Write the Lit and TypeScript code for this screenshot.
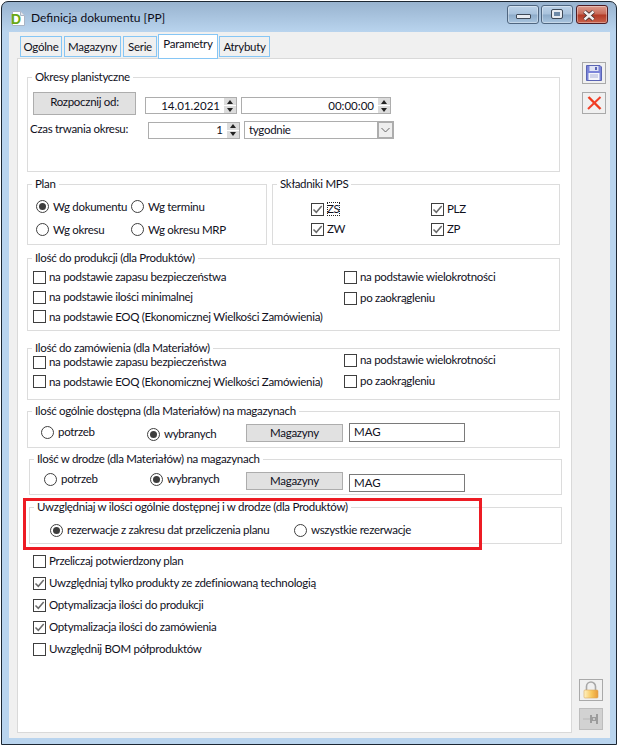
import { LitElement, html, css, svg } from "lit";
import { customElement } from "lit/decorators.js";

const tick = svg`<svg class="tick" width="11" height="11" viewBox="0 0 11 11"><path d="M1.5 5.5 L4.3 8.3 L9.7 2" fill="none" stroke="#6a6a6a" stroke-width="1.5"/></svg>`;

const check = (label: string, on = false, focus = false) => html`<div class="opt chk">
  <span class="box">${on ? tick : ""}</span><span class=${focus ? "focus" : ""}>${label}</span>
</div>`;
const radio = (label: string, on = false) => html`<div class="opt rad">
  <span class="circle">${on ? html`<span class="dot"></span>` : ""}</span><span>${label}</span>
</div>`;
const spin = html`<span class="spin"><span class="sb"><i class="up"></i></span><span class="sb"><i class="down"></i></span></span>`;

@customElement("app-root")
export class AppRoot extends LitElement {
  static styles = css`
    :host { display: block; width: 618px; height: 746px; background: #fff; overflow: hidden;
      font: 11.5px/14px Lato, "Noto Sans", sans-serif; letter-spacing: -0.3px; color: #10101c; }
    * { box-sizing: border-box; }
    .win { margin: 1px 0 0 1px; width: 616px; height: 744px; border: 1px solid #1c2733; border-radius: 7px 7px 0 0;
      background: linear-gradient(#98b3cf 0, #b9d4ee 30px, #b9d4ee 100%); display: flex; flex-direction: column; }
    .title { height: 30px; flex: none; display: flex; align-items: center; padding-left: 9px; font-size: 12px; letter-spacing: 0; }
    .title svg { margin: 2px 6px 0 0; }
    .title .t { flex: 1; margin-top: 2px; color: #0c0c18; }
    .wb { height: 19px; width: 32px; margin-right: 2px; border: 1px solid #4f6680; border-radius: 3px; margin-top: -6px;
      display: flex; align-items: center; justify-content: center;
      background: linear-gradient(#bcd2e8 0, #a8c2dc 48%, #8dabc9 52%, #a9c5df 100%); box-shadow: inset 0 0 0 1px rgba(255,255,255,.35); }
    .wb.close { margin: -6px 8px 0 1px; border-color: #4f1c24; background: linear-gradient(#dc9a8c 0, #c86a58 48%, #b23a26 52%, #c8604a 100%); }
    .wmin { width: 15px; height: 5px; margin-top: 5px; background: #e8ecf2; border: 1px solid #3f4a58; border-radius: 1px; }
    .wmax { width: 10px; height: 8px; background: #6e8aa8; border: 2px solid #e8ecf2; outline: 1px solid #3f4a58; border-radius: 1px; }
    .client { flex: 1; margin: 0 6px 6px 7px; background: #f0f0f0; display: flex; min-height: 0; }
    .main { width: 555px; margin-left: 8px; flex: none; }
    .tabs { height: 26px; display: flex; align-items: flex-end; padding-left: 3px; }
    .tab { height: 21px; margin: 0 2px 1px 0; padding-top: 3px; text-align: center; border: 1px solid #86c6f5; background: #f0f0f0; }
    .tab.a { height: 25px; margin: 0 1px -1px -1px; background: #fff; padding-top: 2px; position: relative; z-index: 1; }
    .w1 { width: 42px; } .w2 { width: 57px; } .w3 { width: 34px; } .w4 { width: 60px; } .w5 { width: 51px; }
    .panel { position: relative; height: 675px; background: #fff; border: 1px solid #d9d9d9; padding: 18px 0 0 9px; }
    .grp { position: relative; width: 533px; border: 1px solid #dcdcdc; }
    .lg { position: absolute; left: 4px; top: -8px; padding: 0 3px; background: #fff; white-space: nowrap; }
    .g1 { height: 95px; padding-top: 14px; }
    .row1 { display: flex; align-items: flex-end; padding-left: 5px; }
    .btn { display: flex; align-items: center; justify-content: center; background: #e1e1e1; border: 1px solid #adadad; flex: none; }
    .start { width: 103px; height: 23px; padding-bottom: 3px; }
    .field { display: flex; align-items: center; justify-content: flex-end; height: 17px; border: 1px solid #adadad; background: #fff; flex: none; letter-spacing: 0; }
    .date { width: 92px; margin: 0 0 1px 9px; }
    .time { width: 150px; margin: 0 0 1px 4px; }
    .row2 { display: flex; align-items: center; margin-top: 6px; padding-left: 2px; }
    .dur { width: 118px; margin-top: -3px; }
    .num { width: 92px; margin-left: 0; }
    .combo { width: 150px; height: 18px; margin-left: 4px; justify-content: space-between; padding-left: 4px; border-right: 0; letter-spacing: -0.3px; }
    .arrow { width: 17px; height: 18px; background: #eee; border: 2px solid #adadad; display: flex; align-items: center; justify-content: center; }
    .spin { width: 12px; height: 15px; margin: 0 0 0 4px; display: flex; flex-direction: column; gap: 1px; background: #fff; flex: none; }
    .sb { flex: 1; background: #dcdcdc; display: flex; align-items: center; justify-content: center; }
    .sb i { display: block; width: 0; height: 0; border-left: 3.5px solid transparent; border-right: 3.5px solid transparent; }
    .up { border-bottom: 4px solid #222; }
    .down { border-top: 4px solid #222; }
    .pair { display: flex; gap: 5px; margin-top: 12px; }
    .plan { width: 240px; height: 61px; padding: 10px 0 0 8px; display: grid; grid-template-columns: 95px 1fr; grid-auto-rows: 23px; }
    .skl { width: 288px; height: 61px; padding: 14px 0 0 38px; display: grid; grid-template-columns: 120px 1fr; grid-auto-rows: 20px; }
    .opt { display: flex; align-items: center; white-space: nowrap; }
    .chk { gap: 3px; height: 20px; }
    .rad { gap: 4px; height: 14px; align-self: center; }
    .plan .rad { height: 23px; }
    .box { width: 13px; height: 13px; border: 1px solid #3f3f3f; background: #fff; flex: none; display: flex; align-items: center; justify-content: center; }
    .circle { width: 13px; height: 13px; border: 1px solid #3f3f3f; border-radius: 50%; background: #fff; flex: none; display: flex; align-items: center; justify-content: center; }
    .dot { width: 7px; height: 7px; border-radius: 50%; background: #3d3d3d; }
    .focus { outline: 1px dotted #222; outline-offset: -1px; }
    .g3 { height: 73px; margin-top: 13px; padding: 8px 0 0 5px; display: flex; }
    .g4 { height: 52px; margin-top: 17px; padding: 3px 0 0 5px; display: flex; }
    .left { width: 311px; }
    .left .chk:last-child { height: 19px; }
    .r4 { margin-top: -2px; }
    .r4 .chk:last-child { height: 22px; }
    .r3 .chk:last-child { height: 22px; }
    .g5 { height: 37px; margin-top: 11px; display: flex; padding-left: 13px; align-items: flex-start; }
    .g6 { height: 36px; margin: 11px 0 0 2px; display: flex; padding-left: 14px; align-items: flex-start; }
    .g7 { height: 37px; margin: 12px 0 0 2px; display: flex; padding-left: 20px; align-items: flex-start; }
    .a1 { width: 106px; margin-top: 13px; }
    .a2 { width: 99px; margin-top: 15px; }
    .mag { width: 97px; height: 18px; margin-top: 12px; }
    .inp { width: 116px; height: 19px; margin: 11px 0 0 6px; border: 1px solid #7a7a7a; background: #fff; padding-left: 4px; line-height: 16px; letter-spacing: 0; }
    .g6 .a1 { margin-top: 12px; }
    .g6 .a2 { width: 96px; margin-top: 12px; }
    .g6 .inp { height: 18px; margin-top: 14px; }
    .g7 .a1 { width: 244px; margin-top: 15px; }
    .g7 .a2 { margin-top: 15px; }
    .list { margin: 6px 0 0 6px; }
    .list .chk:last-child, .list .chk { height: 22px; }
    .red { position: absolute; left: 5px; top: 439px; width: 459px; height: 52px; border: 3px solid #ed1c24; pointer-events: none; }
    .side { flex: 1; padding: 30px 0 8px 10px; display: flex; flex-direction: column; }
    .sbtn { width: 24px; height: 22px; border: 1px solid #a9a9a9; background: #f0f0f0; display: flex; align-items: center; justify-content: center; }
    .gap { margin-top: 8px; }
    .lock { margin: auto 0 0 -3px; }
    .pin { margin: 7px 0 0 -3px; background: #d2d2d2; border-color: #bdbdbd; }
  `;

  render() {
    return html`<div class="win">
      <div class="title">
        <svg width="14" height="15" viewBox="0 0 14 15">
          <path d="M1.5 .5 H9.5 L13.5 4.5 V14.5 H1.5 Z" fill="#fff" stroke="#aab4c4"/>
          <path d="M9.5 .5 V4.5 H13.5" fill="#e4e8ee" stroke="#aab4c4"/>
          <text x="0" y="13" font-family="Liberation Sans" font-weight="700" font-size="14" fill="#6aa812">D</text>
        </svg>
        <span class="t">Definicja dokumentu [PP]</span>
        <div class="wb"><span class="wmin"></span></div>
        <div class="wb"><span class="wmax"></span></div>
        <div class="wb close">
          <svg width="16" height="11" viewBox="0 0 16 11"><path d="M3.5 1.5 L12.5 9.5 M12.5 1.5 L3.5 9.5" stroke="#3a2a2a" stroke-width="4"/><path d="M3.5 1.5 L12.5 9.5 M12.5 1.5 L3.5 9.5" stroke="#f2eeee" stroke-width="2.4"/></svg>
        </div>
      </div>
      <div class="client">
        <div class="main">
          <div class="tabs">
            <div class="tab w1">Ogólne</div><div class="tab w2">Magazyny</div><div class="tab w3">Serie</div>
            <div class="tab a w4">Parametry</div><div class="tab w5">Atrybuty</div>
          </div>
          <div class="panel">
            <div class="grp g1">
              <span class="lg">Okresy planistyczne</span>
              <div class="row1">
                <div class="btn start">Rozpocznij od:</div>
                <div class="field date">14.01.2021${spin}</div>
                <div class="field time">00:00:00${spin}</div>
              </div>
              <div class="row2">
                <span class="dur">Czas trwania okresu:</span>
                <div class="field num">1${spin}</div>
                <div class="field combo"><span>tygodnie</span><span class="arrow">
                  <svg width="9" height="6" viewBox="0 0 9 6"><path d="M.5 1 L4.5 5 L8.5 1" fill="none" stroke="#666"/></svg>
                </span></div>
              </div>
            </div>
            <div class="pair">
              <div class="grp plan">
                <span class="lg">Plan</span>
                ${radio("Wg dokumentu", true)}${radio("Wg terminu")}${radio("Wg okresu")}${radio("Wg okresu MRP")}
              </div>
              <div class="grp skl">
                <span class="lg">Składniki MPS</span>
                ${check("ZS", true, true)}${check("PLZ", true)}${check("ZW", true)}${check("ZP", true)}
              </div>
            </div>
            <div class="grp g3">
              <span class="lg">Ilość do produkcji (dla Produktów)</span>
              <div class="left">
                ${check("na podstawie zapasu bezpieczeństwa")}${check("na podstawie ilości minimalnej")}${check("na podstawie EOQ (Ekonomicznej Wielkości Zamówienia)")}
              </div>
              <div class="r3">${check("na podstawie wielokrotności")}${check("po zaokrągleniu")}</div>
            </div>
            <div class="grp g4">
              <span class="lg">Ilość do zamówienia (dla Materiałów)</span>
              <div class="left">
                ${check("na podstawie zapasu bezpieczeństwa")}${check("na podstawie EOQ (Ekonomicznej Wielkości Zamówienia)")}
              </div>
              <div class="r4">${check("na podstawie wielokrotności")}${check("po zaokrągleniu")}</div>
            </div>
            <div class="grp g5">
              <span class="lg">Ilość ogólnie dostępna (dla Materiałów) na magazynach</span>
              <div class="a1">${radio("potrzeb")}</div><div class="a2">${radio("wybranych", true)}</div>
              <div class="btn mag">Magazyny</div><div class="inp">MAG</div>
            </div>
            <div class="grp g6">
              <span class="lg">Ilość w drodze (dla Materiałów) na magazynach</span>
              <div class="a1">${radio("potrzeb")}</div><div class="a2">${radio("wybranych", true)}</div>
              <div class="btn mag">Magazyny</div><div class="inp">MAG</div>
            </div>
            <div class="grp g7">
              <span class="lg">Uwzględniaj w ilości ogólnie dostępnej i w drodze (dla Produktów)</span>
              <div class="a1">${radio("rezerwacje z zakresu dat przeliczenia planu", true)}</div>
              <div class="a2">${radio("wszystkie rezerwacje")}</div>
            </div>
            <div class="list">
              ${check("Przeliczaj potwierdzony plan")}
              ${check("Uwzględniaj tylko produkty ze zdefiniowaną technologią", true)}
              ${check("Optymalizacja ilości do produkcji", true)}
              ${check("Optymalizacja ilości do zamówienia", true)}
              ${check("Uwzględnij BOM półproduktów")}
            </div>
            <div class="red"></div>
          </div>
        </div>
        <div class="side">
          <div class="sbtn">
            <svg width="16" height="16" viewBox="0 0 16 16">
              <path d="M.5 .5 H14 L15.5 2 V15.5 H.5 Z" fill="#7b84d8" stroke="#5a64b4"/>
              <rect x="3.5" y="1" width="9" height="5" fill="#dfe3f4"/><rect x="9" y="2" width="2" height="3" fill="#5a64b4"/>
              <rect x="2.5" y="8" width="11" height="7" fill="#f4f5fb"/>
              <path d="M4 10 H12 M4 12 H12" stroke="#aab0d8"/>
            </svg>
          </div>
          <div class="sbtn gap">
            <svg width="15" height="14" viewBox="0 0 15 14"><path d="M1.5 1 L13.5 13" stroke="#ef3a1c" stroke-width="2.4"/><path d="M13.5 1 L1 13" stroke="#f2402a" stroke-width="2"/></svg>
          </div>
          <div class="sbtn lock">
            <svg width="16" height="18" viewBox="0 0 16 18">
              <defs><linearGradient id="lk" x1="0" x2="1" y1="0" y2="0"><stop offset="0" stop-color="#fff2c4"/><stop offset=".55" stop-color="#f8c65a"/><stop offset="1" stop-color="#e89a3a"/></linearGradient></defs>
              <path d="M3.5 9 V5.5 a4.5 4.5 0 0 1 9 0 V9" fill="none" stroke="#a8a8a8" stroke-width="1.6"/>
              <rect x="1" y="9" width="14" height="8" rx="1" fill="url(#lk)" stroke="#d8a860" stroke-width=".6"/>
            </svg>
          </div>
          <div class="sbtn pin">
            <svg width="16" height="12" viewBox="0 0 16 12"><path d="M0 6 H7" stroke="#b8b8b8"/><path d="M7 2 H9 V10 H7 Z M9 4 H13 V8 H9 Z M13 1 H15 V11 H13 Z" fill="#9c9c9c"/><rect x="10" y="5" width="2" height="2" fill="#c8c8c8"/></svg>
          </div>
        </div>
      </div>
    </div>`;
  }
}
